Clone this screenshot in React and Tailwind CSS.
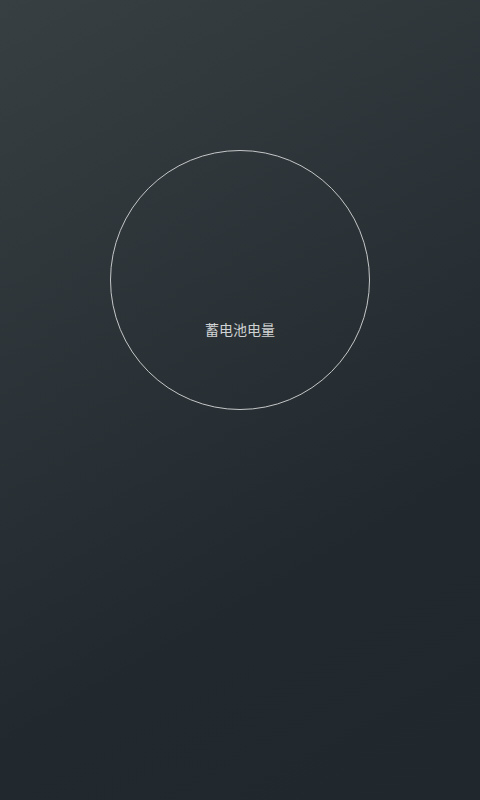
export default function App() {
  return (
    <div
      className="w-[480px] h-[800px] overflow-hidden bg-[linear-gradient(150deg,#383f43_0%,#22292e_70%,#21282d_100%)] flex flex-col items-center pt-[150px]"
      style={{ fontFamily: '"Noto Sans", "Noto Sans CJK SC", sans-serif' }}
    >
      <div className="w-[260px] h-[260px] rounded-full border border-[#c4c7c8] flex flex-col items-center pt-[169px]">
        <span className="text-[14px] leading-[20px] text-[#cfd1d2]">蓄电池电量</span>
      </div>
    </div>
  );
}
